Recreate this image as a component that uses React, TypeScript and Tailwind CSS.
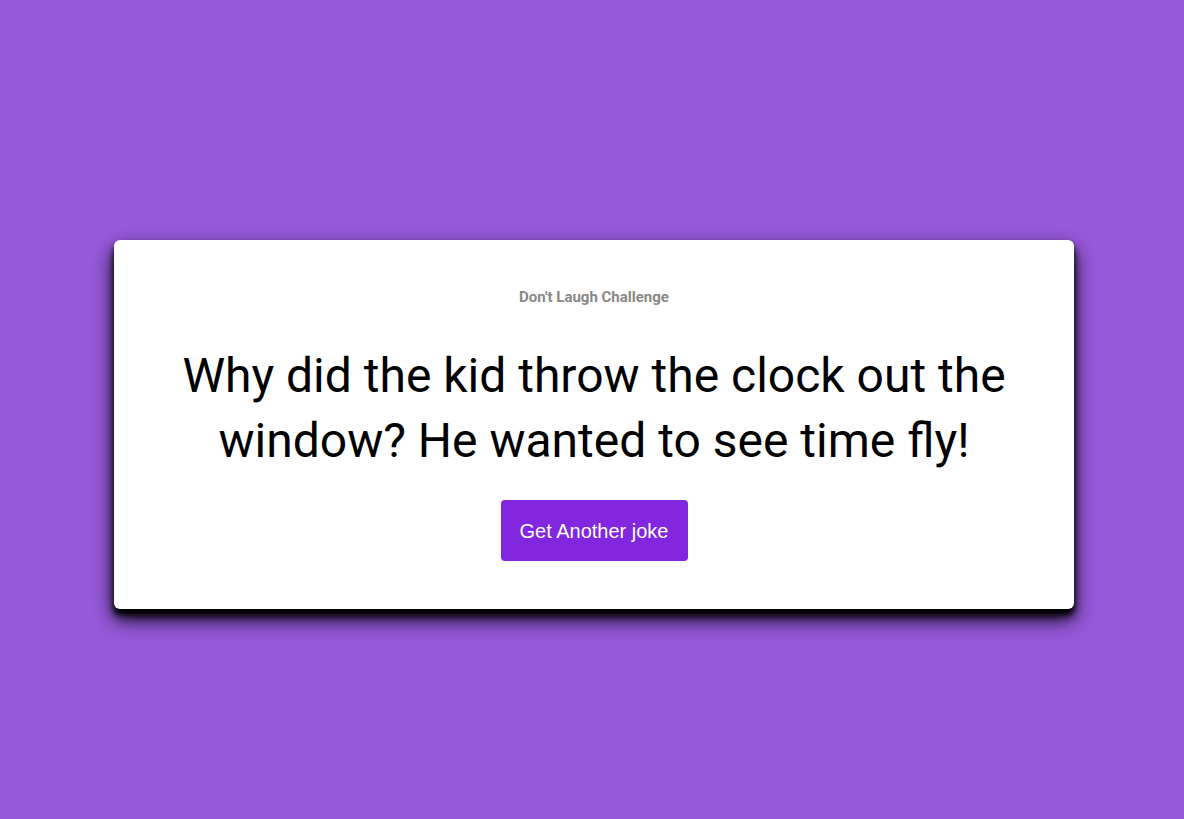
const App = () => {
  return (
    <div className="w-full min-h-screen h-[819px] bg-[#9659db] flex items-center justify-center pt-[30px] pl-[4px]">
      <div className="w-[960px] bg-white rounded-md shadow-[0_10px_20px_#000,0_6px_6px_#000] text-center px-[50px] pt-[49px] pb-[48px]">
        <h3 className="text-[15px] leading-[17px] font-bold text-[#888888] font-['Roboto',sans-serif]">
          Don't Laugh Challenge
        </h3>
        <div className="mt-[37px] text-[48px] leading-[65px] text-black font-['Roboto',sans-serif]">
          Why did the kid throw the clock out the window? He wanted to see time fly!
        </div>
        <button className="mt-[27px] bg-[#8226e0] text-white rounded-[4px] w-[187px] h-[61px] text-[20px] font-['Liberation_Sans',Arial,sans-serif]">
          Get Another joke
        </button>
      </div>
    </div>
  );
};
export default App;
